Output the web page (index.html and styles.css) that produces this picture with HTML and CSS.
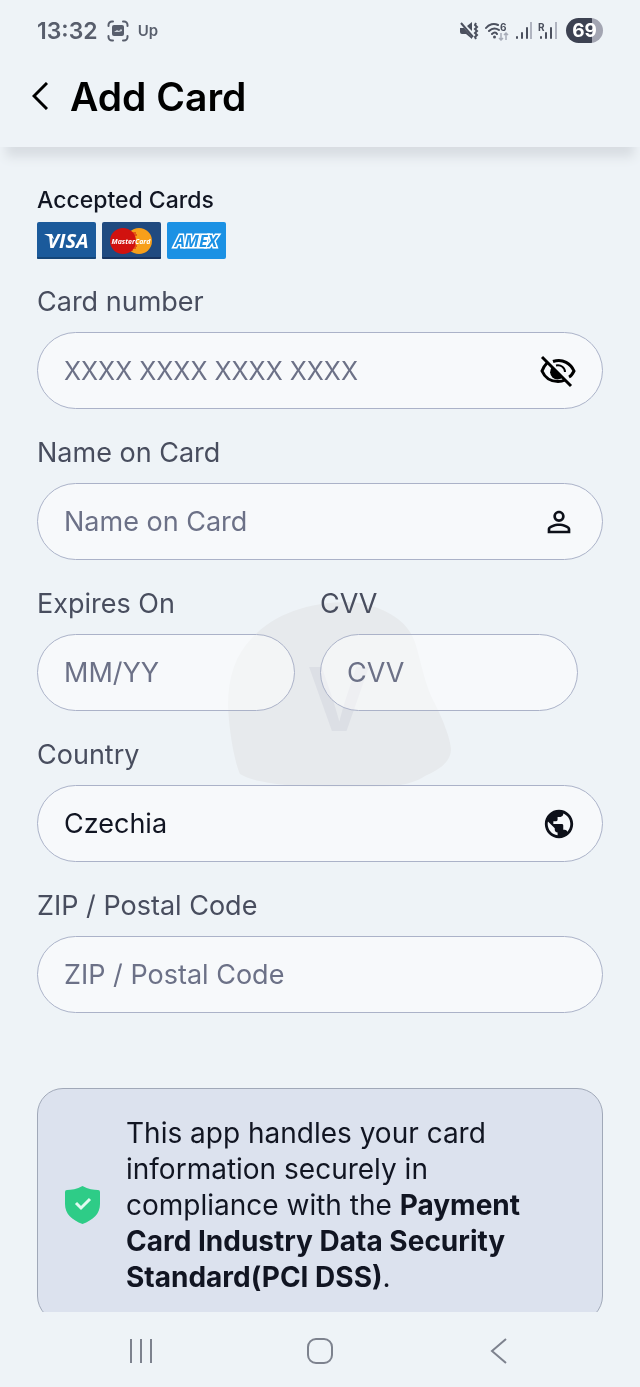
FILE: index.html
```html
<!DOCTYPE html>
<html lang="en">
<head>
    <meta charset="UTF-8">
    <meta name="viewport" content="width=device-width, initial-scale=1.0">
    <title>Add Card</title>
    <link rel="stylesheet" href="styles.css">
</head>
<body>
    <svg class="watermark" viewBox="0 0 224 188" aria-hidden="true">
        <path class="blob" d="M0 105 C0 76 8 54 24 38 C46 14 80 2 122 2 C150 4 173 17 182 32 C191 45 193 75 205 100 C215 119 223 140 223 150 C222 164 208 171 197 176 C180 187 160 187 130 187 C90 188 30 186 12 174 C6 160 1 130 0 105 Z"/>
        <text x="111" y="131" text-anchor="middle">V</text>
    </svg>

    <div class="status-bar">
        <div class="status-left">
            <span class="time">13:32</span>
            <svg class="shot" viewBox="0 0 22 22">
                <path fill="none" stroke="#585e6c" stroke-width="2" stroke-linecap="round" d="M1.500 6V5a3.500 3.500 0 0 1 3.500-3.500h1M16 1.500h1A3.500 3.500 0 0 1 20.500 5v1M20.500 16v1a3.500 3.500 0 0 1-3.500 3.500h-1M6 20.500H5A3.500 3.500 0 0 1 1.500 17v-1"/>
                <rect x="5" y="5" width="12" height="11" rx="2" fill="#585e6c"/>
                <path fill="#cfd5dc" d="M7 12l3-2 2 1 2-2 1 1v1l-3 1z"/>
            </svg>
            <span class="carrier">Up</span>
        </div>
        <div class="status-right">
            <svg class="mute" viewBox="0 0 19 18">
                <path fill="#4b505e" d="M0 6h4l8 9v2l-6-5H2a2 2 0 0 1-2-2zM7 4l5-4v9z"/>
                <path fill="none" stroke="#4b505e" stroke-width="2" d="M1 1l12 14M16 1l-1 2 2 2-2 2 2 2-2 2 2 2-2 2 1 2"/>
            </svg>
            <svg class="wifi" viewBox="0 0 24 20">
                <g fill="none" stroke="#4b505e" stroke-width="2" stroke-linecap="round">
                    <path d="M1 7C4 3 9 2 13 4M4 10c3-3 7-3 10-1M7 13c2-2 4-2 5 0"/>
                </g>
                <circle cx="9.500" cy="16" r="1.500" fill="#4b505e"/>
                <text x="15" y="10" font-size="10">6</text>
                <path fill="none" stroke="#a8adb9" stroke-width="1.500" d="M16 12v7M14 17l2 2 2-2M21 19v-7M19 14l2-2 2 2"/>
            </svg>
            <svg class="signal" viewBox="0 0 17 18">
                <path stroke="#4b505e" stroke-width="2" stroke-linecap="round" d="M2 15v1M7 11v5M12 6v10"/>
                <path stroke="#b0b4c0" stroke-width="2" d="M16 0v17"/>
            </svg>
            <svg class="signal roam" viewBox="0 0 19 18">
                <text x="0" y="9" font-size="10">R</text>
                <path stroke="#4b505e" stroke-width="2" stroke-linecap="round" d="M3 15v1M8 11v5M13 6v10"/>
                <path stroke="#b0b4c0" stroke-width="2" d="M18 0v17"/>
            </svg>
            <span class="battery">69</span>
        </div>
    </div>

    <header class="header">
        <button class="back" type="button" aria-label="Back">
            <svg viewBox="0 0 16 28"><path fill="none" stroke="#000" stroke-width="3" d="M15 1L2 14l13 13"/></svg>
        </button>
        <h1>Add Card</h1>
    </header>

    <main class="content">
        <section class="accepted">
            <h2>Accepted Cards</h2>
            <div class="card-logos">
                <svg viewBox="0 0 59 37" role="img" aria-label="Visa">
                    <rect width="59" height="37" rx="2" fill="#1b5a9b"/>
                    <path d="M0 35h59v1a1 1 0 0 1-1 1H1a1 1 0 0 1-1-1z" fill="#154679"/>
                    <text class="visa" x="31" y="26" text-anchor="middle">VISA</text>
                    <path fill="#fff" d="M7 12h8l2 5z"/>
                </svg>
                <svg viewBox="0 0 59 37" role="img" aria-label="MasterCard">
                    <rect width="59" height="37" rx="2" fill="#204a80"/>
                    <path d="M0 35h59v1a1 1 0 0 1-1 1H1a1 1 0 0 1-1-1z" fill="#183460"/>
                    <circle cx="37" cy="19" r="13" fill="#f79f1a"/>
                    <circle cx="21" cy="19" r="13" fill="#d1120f"/>
                    <path stroke="#d1120f" stroke-width="1" d="M29 11h5M29 13h6M29 24h6M29 26h5M28 28h3"/>
                    <text class="mastercard" x="29" y="22" text-anchor="middle">MasterCard</text>
                </svg>
                <svg viewBox="0 0 59 37" role="img" aria-label="Amex">
                    <rect width="59" height="37" rx="2" fill="#1b91e4"/>
                    <text class="amex" x="29" y="25" text-anchor="middle">AMEX</text>
                </svg>
            </div>
        </section>

        <form class="card-form">
            <div class="field">
                <label for="card_number">Card number</label>
                <div class="input-box">
                    <input type="text" class="number" id="card_number" placeholder="XXXX XXXX XXXX XXXX">
                    <button class="toggle" type="button" aria-label="Show card number">
                        <svg viewBox="-2 0 36 34">
                            <g fill="none" stroke="#000" stroke-width="3">
                                <path d="M5 9C3 11 1 14 0 17c3 7 9 10.500 16 10.500 3 0 5-.5 7-1.500"/>
                                <path d="M11 7.500C21 4 29 10 32 17c-1 2-3 5-5 6"/>
                                <path d="M14 11.500c5-1 9 2 9 6.500" stroke-width="2"/>
                                <path d="M0 3l29 29"/>
                            </g>
                            <path d="M10 13l11 10a7 7 0 1 1-11-10z"/>
                        </svg>
                    </button>
                </div>
            </div>

            <div class="field">
                <label for="card_name">Name on Card</label>
                <div class="input-box">
                    <input type="text" id="card_name" placeholder="Name on Card">
                    <svg viewBox="0 0 24 24"><path fill="#0d1019" d="M12 5.900a2.100 2.100 0 1 1 0 4.200 2.100 2.100 0 0 1 0-4.200m0 9c2.970 0 6.100 1.460 6.100 2.100v1.100H5.900V17c0-.64 3.130-2.100 6.100-2.100M12 4C9.790 4 8 5.790 8 8s1.790 4 4 4 4-1.790 4-4-1.790-4-4-4zm0 9c-2.670 0-8 1.340-8 4v3h16v-3c0-2.660-5.330-4-8-4z"/></svg>
                </div>
            </div>

            <div class="field-row">
                <div class="field">
                    <label for="expires">Expires On</label>
                    <div class="input-box">
                        <input type="text" id="expires" placeholder="MM/YY">
                    </div>
                </div>
                <div class="field">
                    <label for="cvv">CVV</label>
                    <div class="input-box">
                        <input type="text" id="cvv" placeholder="CVV">
                    </div>
                </div>
            </div>

            <div class="field">
                <label for="country">Country</label>
                <div class="input-box">
                    <select id="country">
                        <option>Czechia</option>
                    </select>
                    <svg viewBox="0 0 24 24"><path fill="#0d1019" d="M12 2C6.480 2 2 6.480 2 12s4.480 10 10 10 10-4.480 10-10S17.520 2 12 2zm-1 17.930c-3.950-.49-7-3.850-7-7.930 0-.62.080-1.210.210-1.790L9 15v1c0 1.100.9 2 2 2v1.930zm6.900-2.540c-.26-.81-1-1.390-1.900-1.390h-1v-3c0-.55-.45-1-1-1H8v-2h2c.55 0 1-.45 1-1V7h2c1.100 0 2-.9 2-2v-.41c2.930 1.190 5 4.060 5 7.410 0 2.080-.8 3.970-2.100 5.390z"/></svg>
                </div>
            </div>

            <div class="field">
                <label for="zip">ZIP / Postal Code</label>
                <div class="input-box">
                    <input type="text" id="zip" placeholder="ZIP / Postal Code">
                </div>
            </div>
        </form>

        <div class="notice">
            <svg viewBox="0 0 35 38">
                <path fill="#2ecc87" d="M17.500 0C23 3 29 4 33 4q2 0 2 2v12c0 10-7 16-17.500 20C7 34 0 28 0 18V6q0-2 2-2C6 4 12 3 17.500 0z"/>
                <path fill="none" stroke="#e1faf0" stroke-width="3" d="M11 17l5 5 9-9"/>
            </svg>
            <p>This app handles your card information securely in compliance with the <b>Payment Card Industry Data Security Standard(PCI DSS)</b>.</p>
        </div>
    </main>

    <nav class="nav-bar">
        <button type="button" aria-label="Recent apps">
            <svg viewBox="0 0 26 26"><path stroke="#7d828e" stroke-width="2" d="M3 1v24M13 1v24M23 1v24"/></svg>
        </button>
        <button type="button" aria-label="Home">
            <svg viewBox="0 0 26 26"><rect x="1" y="1" width="24" height="24" rx="8" fill="none" stroke="#7d828e" stroke-width="2"/></svg>
        </button>
        <button type="button" aria-label="Back">
            <svg viewBox="0 0 26 26"><path fill="none" stroke="#7d828e" stroke-width="2" d="M20 1L6 13l14 12"/></svg>
        </button>
    </nav>
</body>
</html>
```
FILE: styles.css
```css
* {
    box-sizing: border-box;
}
body {
    margin: 0;
    height: 100vh;
    display: flex;
    flex-direction: column;
    font-family: Inter, sans-serif;
    font-size: 27px;
    color: #111522;
    background: #eef3f7;
}
button {
    padding: 0;
    border: none;
    background: none;
    cursor: pointer;
}
svg {
    display: block;
    flex: none;
}

/* background logo, sits under the form */
.watermark {
    position: fixed;
    left: 50%;
    top: 50%;
    width: 224px;
    margin: -94px 0 0 -92px;
    z-index: -1;
}
.watermark .blob {
    fill: #e7eaed;
}
.watermark text {
    font-size: 88px;
    font-weight: 600;
    fill: #dcdfe5;
}

.status-bar {
    flex: none;
    height: 61px;
    padding: 0 37px;
    display: flex;
    justify-content: space-between;
    align-items: center;
    color: #585e6c;
}
.status-left, .status-right {
    display: flex;
    align-items: center;
}
.status-left {
    gap: 9px;
}
.status-right {
    gap: 6px;
}
.status-bar text {
    font-weight: 700;
    fill: #4b505e;
}
.time {
    font-size: 23px;
    font-weight: 600;
}
.shot {
    width: 22px;
}
.carrier {
    font-size: 15px;
    font-weight: 600;
}
.mute {
    width: 19px;
}
.wifi {
    width: 24px;
}
.signal {
    height: 18px;
}
.battery {
    width: 37px;
    margin-left: 3px;
    border-radius: 13px;
    background: linear-gradient(to right, #3d4252 70%, #a3a5b2 70%);
    color: white;
    font-size: 19px;
    font-weight: 700;
    line-height: 25px;
    text-align: center;
}

.header {
    flex: none;
    height: 86px;
    padding: 0 32px 16px;
    display: flex;
    align-items: center;
    gap: 22px;
    box-shadow: 0 16px 10px -6px #d8dde2;
}
.back svg {
    width: 16px;
}
h1 {
    margin: 0;
    font-size: 39px;
    font-weight: 600;
    color: black;
}

.content {
    flex: 1;
    min-height: 0;
    overflow: hidden;
    padding: 39px 37px 0;
}
h2 {
    margin: 0 0 8px;
    font-size: 23px;
    font-weight: 500;
    line-height: 28px;
}
.card-logos {
    display: flex;
    gap: 6px;
}
.card-logos svg {
    width: 59px;
}
.card-logos text {
    fill: white;
    font-family: "Open Sans", sans-serif;
    font-style: italic;
    font-weight: 700;
}
.card-logos .visa {
    font-size: 20px;
}
.card-logos .mastercard {
    font-size: 7px;
}
.card-logos .amex {
    font-size: 16px;
    fill: #1b91e4;
    stroke: white;
    stroke-width: 3px;
    paint-order: stroke;
}

.card-form {
    margin-top: 27px;
    display: flex;
    flex-direction: column;
    gap: 28px;
}
.field-row {
    display: grid;
    grid-template-columns: repeat(2, minmax(0, 1fr));
}
.field-row .field {
    padding-right: 25px;
}
label {
    display: block;
    margin-bottom: 14px;
    line-height: 32px;
    color: #484d5e;
}
.input-box {
    height: 77px;
    padding: 0 26px;
    display: flex;
    align-items: center;
    border: 1px solid #abb2c8;
    border-radius: 39px;
    background: rgba(255, 255, 255, 0.5);
}
.input-box svg {
    width: 34px;
}
.input-box .toggle svg {
    width: 36px;
}
input, select {
    flex: 1;
    min-width: 0;
    padding: 0;
    border: none;
    outline: none;
    appearance: none;
    background: transparent;
    font: inherit;
    color: #111522;
}
input::placeholder {
    color: #6c7187;
}
input.number {
    font-size: 25px;
}

.notice {
    margin-top: 75px;
    padding: 26px 40px 26px 27px;
    display: flex;
    align-items: center;
    gap: 26px;
    border: 1px solid #a0a8b8;
    border-radius: 26px;
    background: #dce2ee;
}
.notice svg {
    width: 35px;
}
.notice p {
    margin: 0;
    font-size: 28px;
    line-height: 36px;
}

.nav-bar {
    flex: none;
    height: 75px;
    padding: 2px 52px 0;
    display: flex;
    justify-content: space-around;
    align-items: center;
}
.nav-bar svg {
    width: 26px;
}
```
